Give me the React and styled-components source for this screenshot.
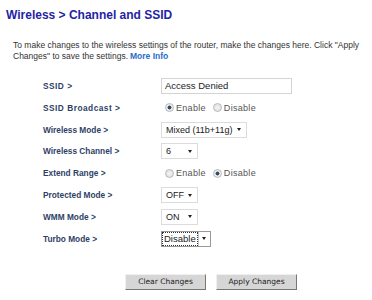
import React from "react";
import styled, { createGlobalStyle } from "styled-components";

const Global = createGlobalStyle`
  html, body {
    margin: 0;
    padding: 0;
    background: #fff;
  }
  body {
    font-family: "Liberation Sans", Arial, sans-serif;
    width: 372px;
    height: 300px;
    overflow: hidden;
  }
`;

const Page = styled.div`
  padding: 8px 0 0 6px;
`;

const Title = styled.h1`
  margin: 0;
  font-size: 12px;
  font-weight: bold;
  color: #1f24a4;
  line-height: 15px;
`;

const Intro = styled.div`
  margin: 17px 0 0 7px;
  font-size: 8.5px;
  line-height: 11px;
  color: #333;
  width: 355px;
`;

const IntroLine = styled.div`
  white-space: nowrap;
`;

const MoreInfo = styled.a`
  color: #2a6cc8;
  font-weight: bold;
  text-decoration: none;
  margin-left: 2px;
`;

const Form = styled.div`
  margin: 13px 0 0 37px;
  display: grid;
  grid-template-columns: 118px auto;
  grid-auto-rows: 21.85px;
  align-items: center;
`;

const Label = styled.div`
  font-size: 8.3px;
  font-weight: bold;
  color: #2e3f66;
  letter-spacing: ${(p) => (p.$spaced ? "0.5px" : "0")};
`;

const TextBox = styled.div`
  width: 126px;
  height: 14px;
  border: 1px solid #d4d4d4;
  font-size: 9.5px;
  line-height: 14px;
  padding-left: 3px;
  box-sizing: content-box;
  color: #222;
`;

const RadioGroup = styled.div`
  display: flex;
  align-items: center;
  gap: 7px;
  padding-left: 4px;
  font-size: 9px;
  color: #555;
  letter-spacing: 0.3px;
`;

const RadioItem = styled.span`
  display: flex;
  align-items: center;
  gap: 2px;
`;

const Dot = styled.span`
  width: 7px;
  height: 7px;
  border-radius: 50%;
  border: 1px solid #b8b8b8;
  background: radial-gradient(circle, ${(p) => (p.$on ? "#3a4a60 0 1.8px, #e8ecf0 2.2px" : "#f4f4f4 0, #dcdcdc 100%")});
  box-sizing: content-box;
`;

const Select = styled.div`
  width: ${(p) => p.$w}px;
  height: 16px;
  border: 1px solid #dcdcdc;
  display: flex;
  align-items: center;
  justify-content: space-between;
  font-size: 9px;
  color: #222;
  padding: 0 5px 0 4px;
  box-sizing: border-box;
  white-space: nowrap;
`;

const Arrow = styled.span`
  width: 0;
  height: 0;
  border-left: 2.5px solid transparent;
  border-right: 2.5px solid transparent;
  border-top: 3px solid #222;
`;

const TurboSelect = styled.div`
  display: flex;
  align-items: stretch;
  height: 14px;
  border: 1px solid #999;
  width: fit-content;
  font-size: 9.5px;
  color: #222;
`;

const Focused = styled.span`
  outline: 1px dotted #333;
  outline-offset: -1px;
  padding: 0 2px;
  line-height: 14px;
`;

const ArrowBox = styled.span`
  width: 11px;
  border-left: 1px solid #c8c8c8;
  display: flex;
  align-items: center;
  justify-content: center;
`;

const Buttons = styled.div`
  display: flex;
  gap: 10px;
  margin: 24px 0 0 119px;
`;

const Button = styled.button`
  width: 81px;
  height: 16px;
  padding: 0;
  background: #d6d6d6;
  border: 1px solid;
  border-color: #f0f0f0 #777 #777 #f0f0f0;
  font-family: "DejaVu Sans", Verdana, sans-serif;
  font-size: 7.5px;
  color: #222;
`;

const Radio = ({ on, children }) => (
  <RadioItem>
    <Dot $on={on} />
    {children}
  </RadioItem>
);

const Drop = ({ w, children }) => (
  <Select $w={w}>
    <span>{children}</span>
    <Arrow />
  </Select>
);

export default function App() {
  return (
    <Page>
      <Global />
      <Title>Wireless &gt; Channel and SSID</Title>
      <Intro>
        <IntroLine>
          To make changes to the wireless settings of the router, make the changes here. Click "Apply
        </IntroLine>
        <IntroLine>
          <span>Changes" to save the settings.</span>
          <MoreInfo href="#">More Info</MoreInfo>
        </IntroLine>
      </Intro>
      <Form>
        <Label $spaced>SSID &gt;</Label>
        <TextBox>Access Denied</TextBox>

        <Label $spaced>SSID Broadcast &gt;</Label>
        <RadioGroup>
          <Radio on>Enable</Radio>
          <Radio>Disable</Radio>
        </RadioGroup>

        <Label>Wireless Mode &gt;</Label>
        <Drop w={86}>Mixed (11b+11g)</Drop>

        <Label>Wireless Channel &gt;</Label>
        <Drop w={37}>6</Drop>

        <Label>Extend Range &gt;</Label>
        <RadioGroup>
          <Radio>Enable</Radio>
          <Radio on>Disable</Radio>
        </RadioGroup>

        <Label>Protected Mode &gt;</Label>
        <Drop w={37}>OFF</Drop>

        <Label>WMM Mode &gt;</Label>
        <Drop w={37}>ON</Drop>

        <Label>Turbo Mode &gt;</Label>
        <TurboSelect>
          <Focused>Disable</Focused>
          <ArrowBox>
            <Arrow />
          </ArrowBox>
        </TurboSelect>
      </Form>
      <Buttons>
        <Button>Clear Changes</Button>
        <Button>Apply Changes</Button>
      </Buttons>
    </Page>
  );
}
